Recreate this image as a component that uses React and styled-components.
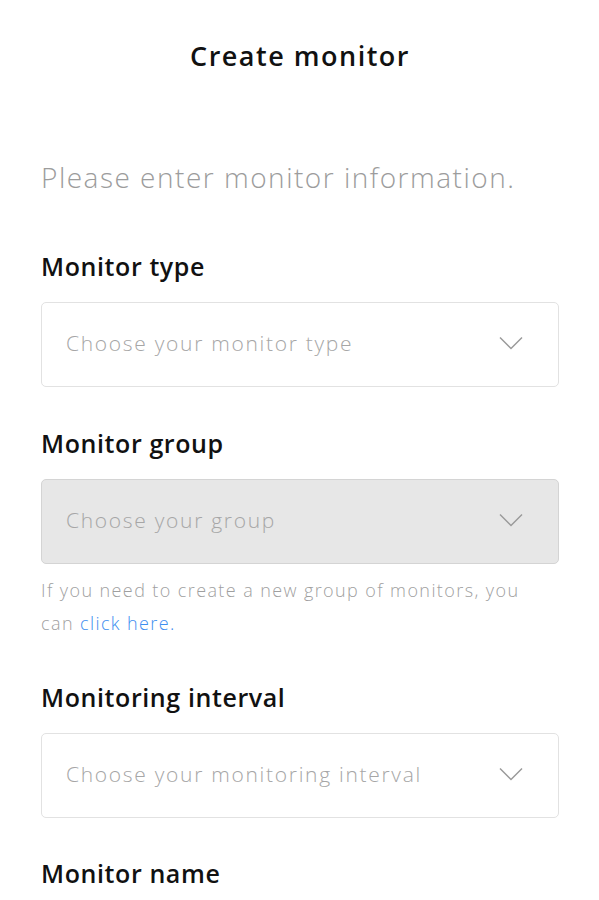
import React from 'react'
import styled, { createGlobalStyle } from 'styled-components'

const GlobalStyle = createGlobalStyle`
  body {
    margin: 0;
    background: #fff;
    font-family: 'Open Sans', 'Noto Sans', sans-serif;
  }
`

const Page = styled('div')`
  padding: 0 40px 0 41px;
  box-sizing: border-box;
  width: 599px;
`

const Title = styled('h1')`
  margin: 0;
  padding-top: 36px;
  text-align: center;
  font-size: 27px;
  font-weight: 600;
  letter-spacing: 1.5px;
  color: #111;
  line-height: 40px;
`

const Intro = styled('p')`
  margin: 81px 0 0;
  font-size: 28px;
  font-weight: 300;
  letter-spacing: 1.5px;
  color: #9c9c9c;
  line-height: 40px;
`

const Field = styled('div')`
  margin-top: ${(p) => p.$gap}px;
`

const Label = styled('div')`
  font-size: 25px;
  font-weight: 600;
  letter-spacing: 0.6px;
  color: #111;
  line-height: 30px;
  margin-bottom: 21px;
`

const Select = styled('div')`
  height: 85px;
  box-sizing: border-box;
  border: 1.5px solid ${(p) => (p.$disabled ? '#d4d4d4' : '#e2e2e2')};
  background: ${(p) => (p.$disabled ? '#e7e7e7' : '#fff')};
  border-radius: 5px;
  display: flex;
  align-items: center;
  justify-content: space-between;
  padding: 0 35px 3px 24px;
`

const Placeholder = styled('span')`
  font-size: 21px;
  font-weight: 300;
  letter-spacing: 1.7px;
  color: #a6a6a6;
`

const Help = styled('p')`
  margin: 10px 0 0;
  padding-right: 20px;
  font-size: 18px;
  font-weight: 300;
  letter-spacing: 1.4px;
  color: #9f9f9f;
  line-height: 33px;
  & a {
    color: #3d8ef0;
    text-decoration: none;
  }
`

function Chevron() {
  return (
    <svg width="24" height="14" viewBox="0 0 24 14" fill="none">
      <polyline points="1,1.5 12,12.5 23,1.5" stroke="#9a9a9a" strokeWidth="1.5" />
    </svg>
  )
}

function SelectBox({ placeholder, disabled }) {
  return (
    <Select $disabled={disabled}>
      <Placeholder>{placeholder}</Placeholder>
      <Chevron />
    </Select>
  )
}

export default function App() {
  return (
    <>
      <GlobalStyle />
      <Page>
        <Title>Create monitor</Title>
        <Intro>Please enter monitor information.</Intro>
        <Field $gap={54}>
          <Label>Monitor type</Label>
          <SelectBox placeholder="Choose your monitor type" />
        </Field>
        <Field $gap={41}>
          <Label>Monitor group</Label>
          <SelectBox placeholder="Choose your group" disabled />
          <Help>
            If you need to create a new group of monitors, you can{' '}
            <a href="#">click here.</a>
          </Help>
        </Field>
        <Field $gap={42}>
          <Label>Monitoring interval</Label>
          <SelectBox placeholder="Choose your monitoring interval" />
        </Field>
        <Field $gap={40}>
          <Label>Monitor name</Label>
        </Field>
      </Page>
    </>
  )
}
